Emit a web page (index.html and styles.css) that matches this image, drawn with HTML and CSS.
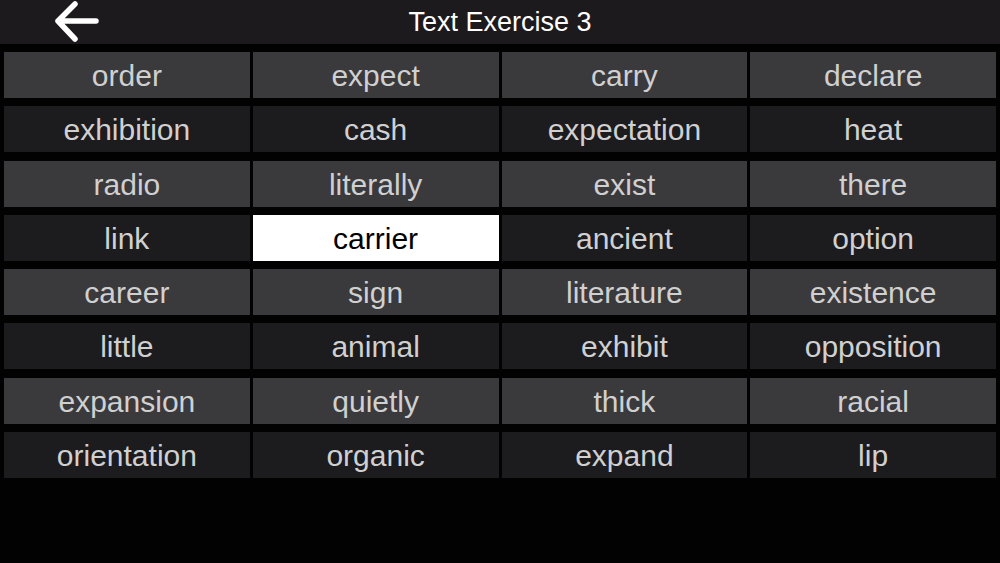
FILE: index.html
```html
<!DOCTYPE html>
<html>
<head>
<meta charset="utf-8">
<link rel="stylesheet" href="styles.css">
</head>
<body>
<div class="app">
  <header class="topbar">
    <div class="back">
      <svg width="48" height="46" viewBox="0 0 48 46">
        <path d="M4 21 H42 M4 21 L21 4 M4 21 L21 39" fill="none" stroke="#fff" stroke-width="5.5" stroke-linecap="round" stroke-linejoin="round"/>
      </svg>
    </div>
    <div class="title">Text Exercise 3</div>
  </header>
  <main class="grid">
    <div class="cell light">order</div><div class="cell light">expect</div><div class="cell light">carry</div><div class="cell light">declare</div>
    <div class="cell dark">exhibition</div><div class="cell dark">cash</div><div class="cell dark">expectation</div><div class="cell dark">heat</div>
    <div class="cell light">radio</div><div class="cell light">literally</div><div class="cell light">exist</div><div class="cell light">there</div>
    <div class="cell dark">link</div><div class="cell selected">carrier</div><div class="cell dark">ancient</div><div class="cell dark">option</div>
    <div class="cell light">career</div><div class="cell light">sign</div><div class="cell light">literature</div><div class="cell light">existence</div>
    <div class="cell dark">little</div><div class="cell dark">animal</div><div class="cell dark">exhibit</div><div class="cell dark">opposition</div>
    <div class="cell light">expansion</div><div class="cell light">quietly</div><div class="cell light">thick</div><div class="cell light">racial</div>
    <div class="cell dark">orientation</div><div class="cell dark">organic</div><div class="cell dark">expand</div><div class="cell dark">lip</div>
  </main>
</div>
</body>
</html>
```

FILE: styles.css
```css
html, body {
  margin: 0;
  padding: 0;
  background: #030203;
}
body {
  width: 1000px;
  height: 563px;
  overflow: hidden;
  font-family: "Liberation Sans", Arial, sans-serif;
}
.topbar {
  position: relative;
  height: 44px;
  background: #1c1a1d;
  display: flex;
  align-items: center;
  justify-content: center;
}
.back {
  position: absolute;
  left: 54px;
  top: 0;
  height: 44px;
}
.title {
  color: #fff;
  font-size: 27px;
  line-height: 44px;
}
.grid {
  display: grid;
  grid-template-columns: repeat(4, 1fr);
  grid-auto-rows: 46px;
  column-gap: 3px;
  row-gap: 8.3px;
  padding: 8px 4px 0 4px;
}
.cell {
  display: flex;
  align-items: center;
  justify-content: center;
  padding-top: 2px;
  box-sizing: border-box;
  font-size: 30px;
  color: #d0d0d1;
}
.light {
  background: #3a393c;
}
.dark {
  background: #1c1b1e;
}
.selected {
  background: #ffffff;
  color: #000;
}
```
